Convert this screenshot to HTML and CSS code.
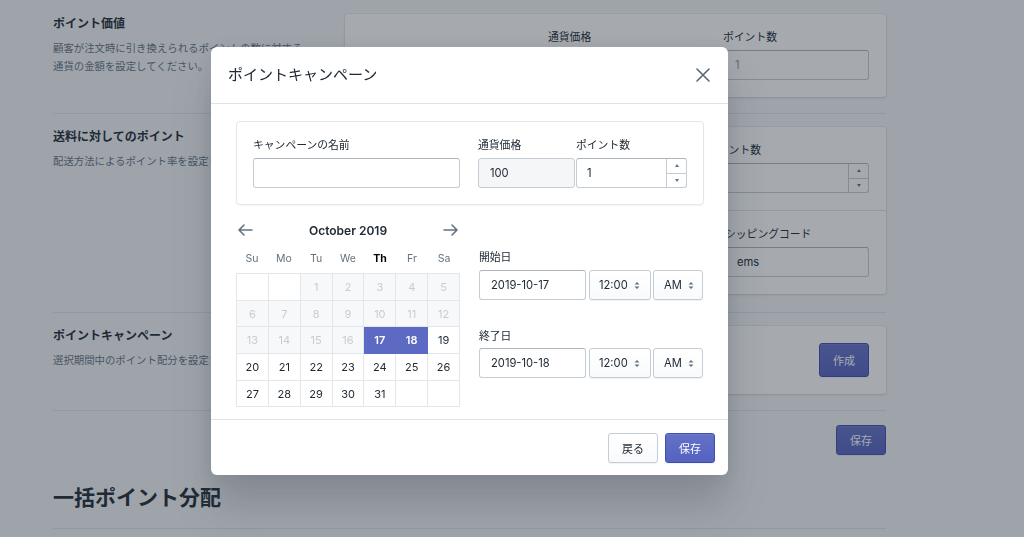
FILE: index.html
```html
<!DOCTYPE html>
<html lang="ja">
<head>
<meta charset="utf-8">
<title>ポイント設定</title>
<link rel="stylesheet" href="styles.css">
</head>
<body>
<div class="page">
  <section class="section first">
    <div class="annot">
      <h2>ポイント価値</h2>
      <p>顧客が注文時に引き換えられるポイントの数に対する<br>通貨の金額を設定してください。</p>
    </div>
    <div class="card">
      <div class="card-section grid-value">
        <div></div>
        <div class="field"><div class="label">通貨価格</div><div class="input">100</div></div>
        <div class="field"><div class="label">ポイント数</div><div class="input muted">1</div></div>
      </div>
    </div>
  </section>

  <section class="section second">
    <div class="annot">
      <h2>送料に対してのポイント</h2>
      <p>配送方法によるポイント率を設定してください。</p>
    </div>
    <div class="card">
      <div class="card-section grid-ship-top">
        <div></div>
        <div class="field"><div class="label">ポイント数</div>
          <div class="input number"><span></span>
            <span class="spinner"><span class="spin up"></span><span class="spin down"></span></span>
          </div>
        </div>
      </div>
      <div class="card-section grid-ship-bottom">
        <div></div>
        <div class="field"><div class="label">シッピングコード</div><div class="input">ems</div></div>
      </div>
    </div>
  </section>

  <section class="section">
    <div class="annot">
      <h2>ポイントキャンペーン</h2>
      <p>選択期間中のポイント配分を設定してください。</p>
    </div>
    <div class="card">
      <div class="card-section campaign-row">
        <button class="btn primary tall">作成</button>
      </div>
    </div>
  </section>

  <div class="save-row">
    <button class="btn primary">保存</button>
  </div>

  <h1 class="page-heading">一括ポイント分配</h1>
</div>

<div class="overlay">
  <div class="modal">
    <div class="modal-header">
      <h1 class="modal-title">ポイントキャンペーン</h1>
      <svg class="close" width="14" height="14" viewBox="0 0 14 14" aria-label="閉じる">
        <path d="M1 1 L13 13 M13 1 L1 13" fill="none" stroke="#5c6772" stroke-width="1.6" stroke-linecap="round"/>
      </svg>
    </div>
    <div class="modal-body">
      <div class="inner-card">
        <div class="field f-name"><div class="label">キャンペーンの名前</div><div class="input"></div></div>
        <div class="field f-price"><div class="label">通貨価格</div><div class="input disabled">100</div></div>
        <div class="field f-points"><div class="label">ポイント数</div>
          <div class="input number"><span>1</span>
            <span class="spinner"><span class="spin up"></span><span class="spin down"></span></span>
          </div>
        </div>
      </div>

      <div class="schedule">
        <div class="calendar">
          <div class="cal-nav">
            <svg width="16" height="14" viewBox="0 0 16 14"><path d="M15 7 H2 M7 2 L2 7 L7 12" fill="none" stroke="#637381" stroke-width="1.6" stroke-linecap="round" stroke-linejoin="round"/></svg>
            <span class="cal-title">October 2019</span>
            <svg width="16" height="14" viewBox="0 0 16 14"><path d="M1 7 H14 M9 2 L14 7 L9 12" fill="none" stroke="#637381" stroke-width="1.6" stroke-linecap="round" stroke-linejoin="round"/></svg>
          </div>
          <div class="weekdays">
            <span>Su</span><span>Mo</span><span>Tu</span><span>We</span><span class="today">Th</span><span>Fr</span><span>Sa</span>
          </div>
          <div class="days">
            <span class="day empty"></span><span class="day empty"></span>
            <span class="day off">1</span><span class="day off">2</span><span class="day off">3</span><span class="day off">4</span><span class="day off">5</span>
            <span class="day off">6</span><span class="day off">7</span><span class="day off">8</span><span class="day off">9</span><span class="day off">10</span><span class="day off">11</span><span class="day off">12</span>
            <span class="day off">13</span><span class="day off">14</span><span class="day off">15</span><span class="day off">16</span><span class="day sel">17</span><span class="day sel">18</span><span class="day">19</span>
            <span class="day">20</span><span class="day">21</span><span class="day">22</span><span class="day">23</span><span class="day">24</span><span class="day">25</span><span class="day">26</span>
            <span class="day">27</span><span class="day">28</span><span class="day">29</span><span class="day">30</span><span class="day">31</span><span class="day empty"></span><span class="day empty"></span>
          </div>
        </div>

        <div class="dates">
          <div class="label">開始日</div>
          <div class="datetime">
            <div class="input date">2019-10-17</div>
            <div class="select time">12:00<svg class="caret" width="6" height="9" viewBox="0 0 6 9"><path d="M0.5 3.5 L3 1 L5.5 3.5 Z M0.5 5.5 L3 8 L5.5 5.5 Z" fill="#637381"/></svg></div>
            <div class="select ampm">AM<svg class="caret" width="6" height="9" viewBox="0 0 6 9"><path d="M0.5 3.5 L3 1 L5.5 3.5 Z M0.5 5.5 L3 8 L5.5 5.5 Z" fill="#637381"/></svg></div>
          </div>
          <div class="label end-label">終了日</div>
          <div class="datetime">
            <div class="input date">2019-10-18</div>
            <div class="select time">12:00<svg class="caret" width="6" height="9" viewBox="0 0 6 9"><path d="M0.5 3.5 L3 1 L5.5 3.5 Z M0.5 5.5 L3 8 L5.5 5.5 Z" fill="#637381"/></svg></div>
            <div class="select ampm">AM<svg class="caret" width="6" height="9" viewBox="0 0 6 9"><path d="M0.5 3.5 L3 1 L5.5 3.5 Z M0.5 5.5 L3 8 L5.5 5.5 Z" fill="#637381"/></svg></div>
          </div>
        </div>
      </div>
    </div>
    <div class="modal-footer">
      <button class="btn">戻る</button>
      <button class="btn primary">保存</button>
    </div>
  </div>
</div>
</body>
</html>
```

FILE: styles.css
```css
* { box-sizing: border-box; }
html, body { margin: 0; padding: 0; }
body {
  width: 1024px;
  height: 537px;
  overflow: hidden;
  position: relative;
  background: #f4f6f8;
  color: #212b36;
  font-family: Inter, "Noto Sans CJK JP", sans-serif;
}

/* ---------- background page ---------- */
.page { margin-left: 53px; width: 833px; }
.section {
  display: grid;
  grid-template-columns: 276px 541px;
  column-gap: 16px;
  padding: 13px 0 16px;
  border-top: 1px solid #dfe3e8;
}
.section.first { border-top: 0; padding-top: 14px; }
.section.second { padding-bottom: 18px; }
.annot h2 { margin: 2px 0 0; font-size: 12px; line-height: 16px; font-weight: 700; }
.annot p { margin: 8px 0 0; font-size: 10.4px; line-height: 18px; color: #637381; }

.card {
  background: #fff;
  border-radius: 3px;
  box-shadow: 0 0 0 1px rgba(63,63,68,.05), 0 1px 3px 0 rgba(63,63,68,.15);
}
.card-section { padding: 16px 17px 17px 18px; }
.card-section + .card-section { border-top: 1px solid #dfe3e8; }
.grid-value { display: grid; grid-template-columns: 1fr 159px 146px; column-gap: 16px; }
.grid-ship-top { display: grid; grid-template-columns: 1fr 162px; }
.grid-ship-bottom { display: grid; grid-template-columns: 1fr 144px; }
.campaign-row { display: flex; justify-content: flex-end; padding: 17px 17px 17px 18px; }

.save-row {
  display: flex;
  justify-content: flex-end;
  border-top: 1px solid #dfe3e8;
  padding-top: 14px;
}
.page-heading {
  margin: 29px 0 0;
  font-size: 21px;
  line-height: 28px;
  font-weight: 700;
  padding-bottom: 16px;
  border-bottom: 1px solid #dfe3e8;
}

/* ---------- form atoms ---------- */
.label { font-size: 10.8px; line-height: 16px; margin-bottom: 4px; color: #212b36; }
.input {
  height: 30px;
  border: 1px solid #c4cdd5;
  border-top-color: #aeb4b9;
  border-radius: 3px;
  background: #fff;
  padding: 0 11px;
  display: flex;
  align-items: center;
  font-size: 11.2px;
  color: #212b36;
}
.input.muted { color: #919eab; }
.input.disabled { background: #f4f6f8; border-color: #c4cdd5; }
.input.number { padding-right: 0; padding-left: 10px; justify-content: space-between; }
.spinner {
  width: 20px;
  align-self: stretch;
  border-left: 1px solid #c4cdd5;
  display: flex;
  flex-direction: column;
}
.spin { flex: 1; display: flex; align-items: center; justify-content: center; }
.spin + .spin { border-top: 1px solid #c4cdd5; }
.spin::after {
  content: "";
  border-left: 2.5px solid transparent;
  border-right: 2.5px solid transparent;
}
.spin.up::after { border-bottom: 3px solid #637381; }
.spin.down::after { border-top: 3px solid #637381; }

.select {
  height: 30px;
  border: 1px solid #c4cdd5;
  border-radius: 3px;
  background: linear-gradient(#fff, #f9fafb);
  box-shadow: 0 1px 0 rgba(22,29,37,.05);
  display: flex;
  align-items: center;
  gap: 6px;
  font-size: 11.2px;
  color: #212b36;
}
.caret { display: block; }

.btn {
  width: 50px;
  height: 30px;
  border-radius: 3px;
  border: 1px solid #c4cdd5;
  background: linear-gradient(#fff, #f9fafb);
  box-shadow: 0 1px 0 rgba(22,29,37,.05);
  font-family: Inter, "Noto Sans CJK JP", sans-serif;
  font-size: 11px;
  color: #212b36;
  padding: 0;
}
.btn.primary {
  background: linear-gradient(#6371c7, #5563c1);
  border-color: #3f4eae;
  color: #fff;
  box-shadow: inset 0 1px 0 0 #6f7bcb, 0 1px 0 0 rgba(22,29,37,.05);
}
.btn.tall { height: 34px; }

/* ---------- overlay + modal ---------- */
.overlay {
  position: fixed;
  inset: 0;
  background: rgba(33,43,54,.4);
}
.modal {
  position: absolute;
  left: 211px;
  top: 47px;
  width: 517px;
  background: #fff;
  border-radius: 6px;
  box-shadow: 0 31px 41px 0 rgba(32,42,54,.2), 0 2px 16px 0 rgba(32,42,54,.08);
}
.modal-header {
  height: 57px;
  padding: 0 18px 0 17px;
  border-bottom: 1px solid #dfe3e8;
  display: flex;
  align-items: center;
  justify-content: space-between;
}
.modal-title { margin: 0; font-size: 15px; font-weight: 400; line-height: 20px; }
.close { display: block; }

.modal-body { padding: 17px 24px 12px 25px; }
.inner-card {
  border: 1px solid #e3e6ea;
  border-radius: 4px;
  box-shadow: 0 1px 2px rgba(63,63,68,.06);
  padding: 16px;
  display: flex;
}
.f-name { width: 207px; margin-right: 18px; }
.f-price { width: 97px; margin-right: 1px; }
.f-points { width: 111px; }

.schedule { display: flex; gap: 19px; margin-top: 12px; }
.calendar { width: 224px; }
.cal-nav {
  height: 26px;
  margin-bottom: 4px;
  display: flex;
  align-items: center;
  justify-content: space-between;
  padding: 0 1px;
}
.cal-title { font-size: 12px; font-weight: 600; color: #212b36; }
.weekdays {
  display: grid;
  grid-template-columns: repeat(7, 1fr);
  height: 22px;
  margin-bottom: 4px;
  align-items: center;
  text-align: center;
  font-size: 10.5px;
  color: #637381;
}
.weekdays .today { font-weight: 700; color: #000; }
.days {
  display: grid;
  grid-template-columns: repeat(7, 1fr);
  grid-auto-rows: 26.7px;
  border-left: 1px solid #e3e6ea;
  border-top: 1px solid #e3e6ea;
}
.day {
  border-right: 1px solid #e3e6ea;
  border-bottom: 1px solid #e3e6ea;
  display: flex;
  align-items: center;
  justify-content: center;
  font-size: 11px;
  color: #212b36;
  background: #fff;
}
.day.off { background: #f7f8fa; color: #c4cdd5; }
.day.sel { background: #5c6ac4; color: #fff; font-weight: 600; border-color: #5c6ac4; }

.dates { flex: 1; padding-top: 33px; }
.end-label { margin-top: 29px; margin-bottom: 3px; }
.datetime { display: flex; }
.date { width: 107px; margin-right: 3px; }
.time { width: 62px; margin-right: 2px; padding-left: 9px; }
.ampm { width: 50px; padding-left: 10px; }

.modal-footer {
  height: 56px;
  border-top: 1px solid #dfe3e8;
  display: flex;
  justify-content: flex-end;
  align-items: center;
  gap: 7px;
  padding-right: 13px;
}
```
